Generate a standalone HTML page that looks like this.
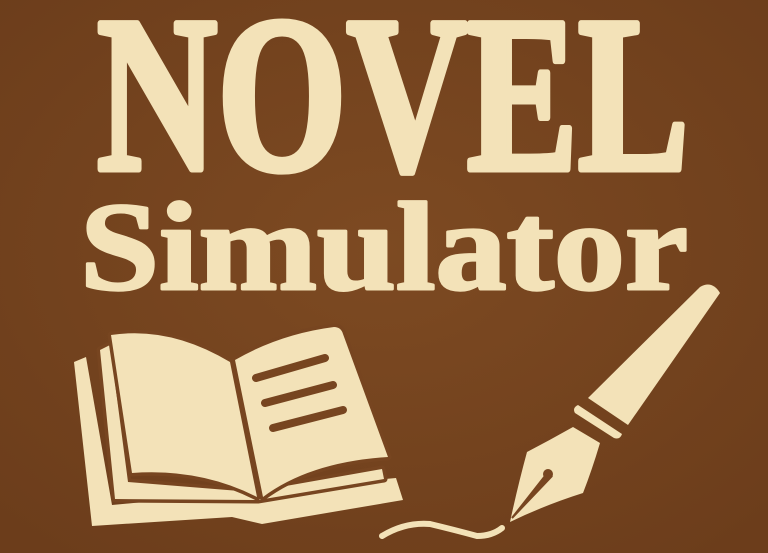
<!DOCTYPE html>
<html><head><meta charset="utf-8"><style>
html,body{margin:0;padding:0;}
body{width:768px;height:553px;overflow:hidden;background:#774520;}
svg{display:block;}
</style></head><body>
<svg width="768" height="553" viewBox="0 0 768 553" xmlns="http://www.w3.org/2000/svg">
<defs>
<radialGradient id="bg" cx="50%" cy="45%" r="70%">
<stop offset="0" stop-color="#7d4a22"/><stop offset="1" stop-color="#6c3d1b"/>
</radialGradient>
</defs>
<rect width="768" height="553" fill="url(#bg)"/>
<g fill="#f3e2b8" stroke="#f3e2b8" stroke-linejoin="round" font-family="'Liberation Serif',serif" font-weight="bold">
<text x="97" y="169" font-size="222" stroke-width="7" textLength="592" lengthAdjust="spacingAndGlyphs">NOVEL</text>
<text x="80" y="289" font-size="126" stroke-width="3" textLength="608" lengthAdjust="spacingAndGlyphs">Simulator</text>
</g>
<g fill="#f3e2b8" stroke="#774520" stroke-width="7" stroke-linejoin="round" paint-order="stroke">
<path d="M74,362 L86,357 L112,505 L396,478 L403,500 L262,524 L232,517 L92,526 Z" stroke="none"/>
<path d="M100,350 L110,345 L128,482 L252,492 L382,469 L384,479 L258,500 L115,499 Z"/>
<path d="M111,335 Q170,326 230,362 L257,497 Q200,468 132,473 Z"/>
<path d="M235,360 Q280,334 334,327 Q341,327 343,334 L388,457 Q310,462 263,497 Z"/>
</g>
<g stroke="#774520" stroke-width="8" stroke-linecap="round" fill="none">
<path d="M256,378 L325,358"/>
<path d="M265,403 L333,385"/>
<path d="M273,428 L343,410"/>
</g>
<g fill="#f3e2b8">
<path d="M700,287 Q712,280 720,293 L628,425 L588,398 Z"/>
<path d="M578,405 L622,434 Q620,440 614,438 L575,413 Q572,408 578,405 Z"/>
<path d="M573,427 L600,443 Q592,470 583,493 Q545,505 510,522 Q518,485 527,452 Q550,440 573,427 Z"/>
</g>
<g fill="#774520">
<circle cx="548" cy="474" r="5"/>
<path d="M545,476 L512,518 L551,477 Z" stroke="#774520" stroke-width="2"/>
</g>
<path d="M382,536 Q405,522 430,524 Q455,530 477,536 Q492,536 502,528" stroke="#f3e2b8" stroke-width="6" fill="none" stroke-linecap="round"/>
</svg>
</body></html>
